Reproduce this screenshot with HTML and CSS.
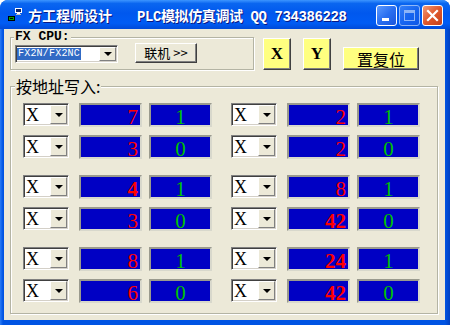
FILE: index.html
```html
<!DOCTYPE html>
<html lang="zh-CN">
<head>
    <meta charset="UTF-8">
    <title>方工程师设计 PLC模拟仿真调试</title>
    <link rel="stylesheet" href="styles.css">
</head>
<body>
    <div class="window">
        <div class="titlebar">
            <svg class="app-icon" width="14" height="14" viewBox="0 0 14 14">
                <rect x="7.5" y="0.5" width="6" height="4" fill="#0a246a" stroke="#fff"/>
                <rect x="9" y="5" width="3" height="1" fill="#fff"/>
                <rect x="8" y="6" width="5" height="1" fill="#c0c0c0"/>
                <rect x="0.5" y="8.5" width="6" height="4" fill="#00a000" stroke="#000"/>
                <rect x="2" y="10" width="3" height="1" fill="#000"/>
            </svg>
            <span class="title">方工程师设计</span>
            <span class="title title-sub">PLC模拟仿真调试 QQ 734386228</span>
            <div class="caption-buttons">
                <span class="cap-btn cap-min"><i></i></span>
                <span class="cap-btn cap-max"><i></i></span>
                <span class="cap-btn cap-close">
                    <svg width="13" height="13" viewBox="0 0 13 13">
                        <path d="M2 2 L11 11 M11 2 L2 11" stroke="#fff" stroke-width="2.2" stroke-linecap="square"/>
                    </svg>
                </span>
            </div>
        </div>

        <div class="client">
            <div class="top-row">
                <div class="group cpu-group">
                    <div class="group-title cpu-title">FX CPU:</div>
                    <div class="cpu-controls">
                        <div class="combo cpu-combo">
                            <span class="combo-value"><span class="selected">FX2N/FX2NC</span></span>
                            <span class="combo-arrow"><b></b></span>
                        </div>
                        <button class="btn connect">联机 &gt;&gt;</button>
                    </div>
                </div>
                <button class="btn yellow xy">X</button>
                <button class="btn yellow xy">Y</button>
                <button class="btn yellow reset">置复位</button>
            </div>

            <div class="group addr-group">
                <div class="group-title addr-title">按地址写入:</div>
                <div class="rows" id="rows"></div>
            </div>
        </div>
    </div>

    <script>
        // [address, state, bold] for left and right half of each line
        const lines = [
            [['7', '1'], ['2', '1']],
            [['3', '0'], ['2', '0']],
            [['4', '1', true], ['8', '1']],
            [['3', '0'], ['42', '0', true]],
            [['8', '1'], ['24', '1', true]],
            [['6', '0'], ['42', '0', true]]
        ];

        function makeHalf(item) {
            const half = document.createElement('div');
            half.className = 'half';
            half.innerHTML = `
                <div class="combo addr-combo">
                    <span class="combo-value">X</span>
                    <span class="combo-arrow"><b></b></span>
                </div>
                <div class="field addr${item[2] ? ' bold' : ''}">${item[0]}</div>
                <div class="field state">${item[1]}</div>`;
            return half;
        }

        const rowsDiv = document.getElementById('rows');
        for (let i = 0; i < lines.length; i += 2) {
            const pair = document.createElement('div');
            pair.className = 'pair';
            [lines[i], lines[i + 1]].forEach(line => {
                const row = document.createElement('div');
                row.className = 'row';
                row.appendChild(makeHalf(line[0]));
                row.appendChild(makeHalf(line[1]));
                pair.appendChild(row);
            });
            rowsDiv.appendChild(pair);
        }
    </script>
</body>
</html>
```

FILE: styles.css
```css
body {
    margin: 0;
    font-family: "Noto Sans CJK SC", sans-serif;
    background: #fff;
}
.window {
    width: 450px;
    height: 325px;
    display: flex;
    flex-direction: column;
    background: linear-gradient(to right, #2a7cf6 0px, #0054e3 3px, #0054e3 445px, #0040c0 450px);
    border-radius: 8px 8px 0 0;
    overflow: hidden;
}
.titlebar {
    height: 29px;
    flex-shrink: 0;
    display: flex;
    align-items: center;
    padding-left: 8px;
    background: linear-gradient(to bottom, #3d95ff 0%, #0a66f0 12%, #0058ee 45%, #005cf4 80%, #004ad8 100%);
    color: #fff;
    font-size: 14px;
    font-weight: bold;
    text-shadow: 1px 1px 0 #0a1883;
}
.app-icon {
    flex-shrink: 0;
    margin-top: 1px;
}
.title {
    margin-left: 6px;
    white-space: nowrap;
}
.title-sub {
    margin-left: 25px;
    font-family: "Liberation Mono", "Noto Sans CJK SC", monospace;
    letter-spacing: -0.4px;
}
.caption-buttons {
    margin-left: auto;
    margin-right: 7px;
    display: flex;
    gap: 2px;
    margin-top: 2px;
}
.cap-btn {
    width: 19px;
    height: 19px;
    border: 1px solid #fff;
    border-radius: 3px;
    background: linear-gradient(135deg, #5d9bff 0%, #2a6ff0 50%, #1b56dc 100%);
    display: flex;
    align-items: center;
    justify-content: center;
    position: relative;
}
.cap-min i {
    position: absolute;
    left: 5px;
    bottom: 4px;
    width: 7px;
    height: 3px;
    background: #fff;
}
.cap-max {
    opacity: 0.55;
}
.cap-max i {
    width: 9px;
    height: 7px;
    border: 1px solid #fff;
    border-top-width: 3px;
}
.cap-close {
    background: linear-gradient(135deg, #f09a78 0%, #e0582c 50%, #c2401c 100%);
}

.client {
    flex: 1;
    margin: 0 5px 5px 4px;
    background: #ece9d8;
    display: flex;
    flex-direction: column;
}
.top-row {
    display: flex;
    align-items: flex-end;
    padding-left: 6px;
    margin-top: 8px;
}
.group {
    border: 1px solid #b4b4a4;
    box-shadow: inset 1px 1px 0 #fff, 1px 1px 0 #fff;
    box-sizing: border-box;
    display: flex;
    flex-direction: column;
}
.group-title {
    align-self: flex-start;
    background: #ece9d8;
    padding: 0 1px;
}
.cpu-group {
    width: 244px;
    height: 33px;
}
.cpu-title {
    margin: -7px 0 0 3px;
    height: 12px;
    line-height: 12px;
    font-family: "Liberation Mono", monospace;
    font-weight: bold;
    font-size: 13px;
}
.cpu-controls {
    display: flex;
    align-items: flex-start;
    padding-left: 4px;
}

.combo {
    display: flex;
    box-sizing: border-box;
    background: #fff;
    border: 1px solid;
    border-color: #808080 #fff #fff #808080;
    box-shadow: inset 1px 1px 0 #404040, inset -1px -1px 0 #d4d0c8;
    padding: 1px;
}
.combo-value {
    flex: 1;
    display: flex;
    align-items: center;
}
.combo-arrow {
    width: 17px;
    box-sizing: border-box;
    background: #ece9d8;
    border: 1px solid;
    border-color: #fff #808080 #808080 #fff;
    display: flex;
    align-items: center;
    justify-content: center;
}
.combo-arrow b {
    width: 0;
    height: 0;
    border-left: 4px solid transparent;
    border-right: 4px solid transparent;
    border-top: 4px solid #000;
}
.cpu-combo {
    width: 103px;
    height: 18px;
    margin-top: 2px;
}
.cpu-combo .selected {
    background: #316ac5;
    color: #fff;
    font-family: "Liberation Mono", monospace;
    font-size: 10px;
    letter-spacing: 0.2px;
    line-height: 12px;
    padding: 0 1px;
}

.btn {
    box-sizing: border-box;
    border: 1px solid;
    border-color: #fff #404040 #404040 #fff;
    box-shadow: inset -1px -1px 0 #808080;
    background: #ece9d8;
    color: #000;
    padding: 0;
    font-family: "Noto Sans CJK SC", sans-serif;
}
.connect {
    width: 62px;
    height: 20px;
    margin-left: 17px;
    font-size: 13px;
    line-height: 16px;
}
.yellow {
    background: #ffff80;
}
.xy {
    width: 28px;
    height: 32px;
    margin-left: 12px;
    font-family: "Liberation Serif", serif;
    font-weight: bold;
    font-size: 17px;
}
.xy:first-of-type {
    margin-left: 9px;
}
.reset {
    width: 76px;
    height: 23px;
    margin-left: 12px;
    font-size: 16px;
    line-height: 20px;
}

.addr-group {
    margin: 16px 7px 0 6px;
    height: 228px;
}
.addr-title {
    margin: -9px 0 0 4px;
    height: 17px;
    line-height: 17px;
    font-size: 16px;
}
.rows {
    margin-top: 8px;
    padding-left: 12px;
    display: flex;
    flex-direction: column;
    gap: 16px;
}
.pair {
    display: flex;
    flex-direction: column;
    gap: 8px;
}
.row {
    display: flex;
    gap: 19px;
}
.half {
    display: flex;
    align-items: flex-start;
}
.addr-combo {
    width: 46px;
    height: 23px;
    margin-right: 10px;
}
.addr-combo .combo-value {
    font-family: "Liberation Serif", serif;
    font-size: 18px;
    padding: 1px 0 0 1px;
}
.field {
    box-sizing: border-box;
    width: 63px;
    height: 24px;
    background: #0000c4;
    border: 2px solid;
    border-color: #9a9a8e #d8d8cc #d8d8cc #9a9a8e;
    font-family: "Liberation Serif", serif;
    font-size: 21px;
    line-height: 22px;
    padding-top: 1px;
}
.field + .field {
    margin-left: 7px;
}
.addr {
    color: #ff0000;
    text-align: right;
    padding-right: 2px;
}
.addr.bold {
    font-weight: bold;
}
.state {
    color: #00c000;
    text-align: center;
}
```
